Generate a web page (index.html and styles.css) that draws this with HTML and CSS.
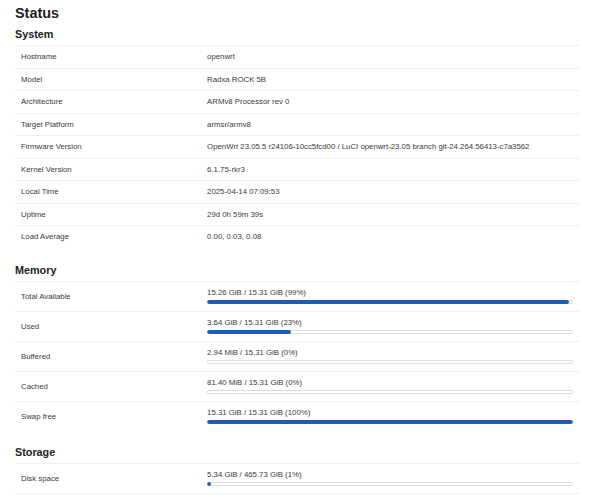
FILE: index.html
```html
<!DOCTYPE html>
<html lang="en">
<head>
  <meta charset="UTF-8" />
  <meta name="viewport" content="width=device-width, initial-scale=1.0" />
  <title>Status - LuCI</title>
  <link rel="stylesheet" href="styles.css">
</head>
<body>
  <div class="main">
    <h1>Status</h1>

    <div class="section">
      <h2>System</h2>
      <div class="table">
        <div class="tr"><div class="td">Hostname</div><div class="td">openwrt</div></div>
        <div class="tr"><div class="td">Model</div><div class="td">Radxa ROCK 5B</div></div>
        <div class="tr"><div class="td">Architecture</div><div class="td">ARMv8 Processor rev 0</div></div>
        <div class="tr"><div class="td">Target Platform</div><div class="td">armsr/armv8</div></div>
        <div class="tr"><div class="td">Firmware Version</div><div class="td">OpenWrt 23.05.5 r24106-10cc5fcd00 / LuCI openwrt-23.05 branch git-24.264.56413-c7a3562</div></div>
        <div class="tr"><div class="td">Kernel Version</div><div class="td">6.1.75-rkr3</div></div>
        <div class="tr"><div class="td">Local Time</div><div class="td">2025-04-14 07:09:53</div></div>
        <div class="tr"><div class="td">Uptime</div><div class="td">29d 0h 59m 39s</div></div>
        <div class="tr"><div class="td">Load Average</div><div class="td">0.00, 0.03, 0.08</div></div>
      </div>
    </div>

    <div class="section">
      <h2>Memory</h2>
      <div class="table">
        <div class="tr tall">
          <div class="td">Total Available</div>
          <div class="td">
            <div class="bar-label">15.26 GiB / 15.31 GiB (99%)</div>
            <div class="progress"><div class="fill" style="width: 99%"></div></div>
          </div>
        </div>
        <div class="tr tall">
          <div class="td">Used</div>
          <div class="td">
            <div class="bar-label">3.64 GiB / 15.31 GiB (23%)</div>
            <div class="progress"><div class="fill" style="width: 23%"></div></div>
          </div>
        </div>
        <div class="tr tall">
          <div class="td">Buffered</div>
          <div class="td">
            <div class="bar-label">2.94 MiB / 15.31 GiB (0%)</div>
            <div class="progress"><div class="fill" style="width: 0%"></div></div>
          </div>
        </div>
        <div class="tr tall">
          <div class="td">Cached</div>
          <div class="td">
            <div class="bar-label">81.40 MiB / 15.31 GiB (0%)</div>
            <div class="progress"><div class="fill" style="width: 0%"></div></div>
          </div>
        </div>
        <div class="tr tall">
          <div class="td">Swap free</div>
          <div class="td">
            <div class="bar-label">15.31 GiB / 15.31 GiB (100%)</div>
            <div class="progress"><div class="fill" style="width: 100%"></div></div>
          </div>
        </div>
      </div>
    </div>

    <div class="section">
      <h2>Storage</h2>
      <div class="table closed">
        <div class="tr tall">
          <div class="td">Disk space</div>
          <div class="td">
            <div class="bar-label">5.34 GiB / 465.73 GiB (1%)</div>
            <div class="progress"><div class="fill" style="width: 1%"></div></div>
          </div>
        </div>
      </div>
    </div>
  </div>
</body>
</html>
```

FILE: styles.css
```css
* {
  margin: 0;
  padding: 0;
  box-sizing: border-box;
}

body {
  font-family: "Liberation Sans", Arial, sans-serif;
  font-size: 7.8px;
  color: #3a3a3a;
  background: #fff;
}

.main {
  padding: 0 13px 0 15px;
}

h1 {
  font-size: 14.4px;
  line-height: 21px;
  margin-top: 3px;
  color: #222;
}

h2 {
  font-size: 10.8px;
  line-height: 21px;
  color: #222;
}

.section + .section {
  margin-top: 12px;
}

.section:last-child {
  margin-top: 11px;
}

.tr {
  display: grid;
  grid-template-columns: 33% minmax(0, 1fr);
  align-items: center;
  height: 22.5px;
  border-top: 1px solid #eee;
}

.tr.tall {
  height: 30px;
}

.table.closed {
  border-bottom: 1px solid #eee;
}

.td {
  padding: 0 6px;
  white-space: nowrap;
}

.bar-label {
  line-height: 9px;
  margin-top: -1px;
}

.progress {
  height: 4px;
  margin-top: 3px;
  border-radius: 2px;
  background: #fff;
  box-shadow: inset 0 0 0 1px #ddd;
  overflow: hidden;
}

.fill {
  height: 100%;
  border-radius: 2px;
  background: #1c5db8;
}
```
